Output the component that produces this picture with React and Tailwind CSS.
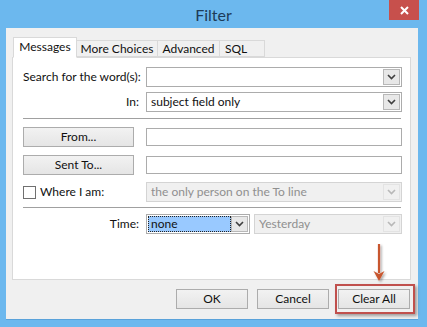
import React from 'react'

const font = { fontFamily: 'Lato, "Noto Sans", sans-serif' }

function Chevron({ disabled }) {
  return (
    <svg width="9" height="6" viewBox="0 0 9 6">
      <path d="M1 1 L4.5 4.5 L8 1" fill="none" stroke={disabled ? '#b8b8b8' : '#404040'} strokeWidth="1.6" />
    </svg>
  )
}

function Combo({ value, disabled, selected, className = '' }) {
  return (
    <div
      className={`flex items-stretch h-[20px] border p-[1px] ${
        disabled ? 'bg-[#f0f0f0] border-[#d4d4d4]' : 'bg-white border-[#acacac]'
      } ${className}`}
    >
      <div className="flex-1 flex items-center min-w-0">
        {selected ? (
          <span className="flex-1 h-full flex items-center bg-[#99c9ff] border border-dotted border-[#222] pl-[2px] text-[#111]">
            {value}
          </span>
        ) : (
          <span className={`pl-[3px] whitespace-nowrap ${disabled ? 'text-[#8f8f8f]' : 'text-[#111]'}`}>{value}</span>
        )}
      </div>
      <div
        className={`w-[17px] flex items-center justify-center border ${
          disabled ? 'border-[#e3e3e3] bg-[#f0f0f0]' : 'border-[#b8b8b8] bg-[#e8e8e8]'
        }`}
      >
        <Chevron disabled={disabled} />
      </div>
    </div>
  )
}

function Field() {
  return <div className="h-[18px] bg-white border border-[#acacac]" />
}

function Btn({ children, className = '' }) {
  return (
    <div
      className={`h-[20px] flex items-center justify-center border border-[#acacac] bg-gradient-to-b from-[#f2f2f2] to-[#e5e5e5] text-[#111] ${className}`}
    >
      {children}
    </div>
  )
}

export default function App() {
  return (
    <div
      className="w-[427px] h-[327px] bg-[#6cb8ee] relative flex flex-col text-[12px] leading-[16px] whitespace-nowrap"
      style={font}
    >
      {/* Title bar */}
      <div className="h-[28px] flex items-center justify-center text-[16px] text-[#1d3b58] pt-[1px]">Filter</div>
      <div className="absolute right-[8px] top-0 w-[30px] h-[20px] bg-[#c7504c] flex items-center justify-center">
        <svg width="9" height="9" viewBox="0 0 9 9">
          <path d="M1 1 L8 8 M8 1 L1 8" stroke="#fff" strokeWidth="2" />
        </svg>
      </div>

      {/* Body */}
      <div className="ml-[6px] mr-[9px] h-[292px] bg-[#f0f0f0] border-b border-[#5aa2da] pt-[9px] pl-[6px] pr-[7px] flex flex-col">
        {/* Tabs */}
        <div className="flex items-end h-[20px] pl-[1px] relative z-10">
          <div className="h-[21px] -mb-[1px] w-[64px] bg-white border border-[#d9d9d9] border-b-white flex items-center justify-center pb-[1px] text-[#111]">
            Messages
          </div>
          <div className="h-[17px] w-[81px] bg-[#f0f0f0] border border-[#d9d9d9] border-l-0 flex items-center justify-center text-[#111]">
            More Choices
          </div>
          <div className="h-[17px] w-[62px] bg-[#f0f0f0] border border-[#d9d9d9] border-l-0 flex items-center justify-center text-[#111]">
            Advanced
          </div>
          <div className="h-[17px] w-[45px] bg-[#f0f0f0] border border-[#d9d9d9] border-l-0 flex items-center pl-[5px] text-[#111]">
            SQL
          </div>
        </div>

        {/* Panel */}
        <div className="h-[223px] bg-white border border-[#d9d9d9] pl-[10px] pr-[8px] pt-[9px] text-[#111]">
          <div className="grid grid-cols-[116px_1fr] gap-x-[7px] items-center">
            <div className="text-right">Search for the word(s):</div>
            <Combo value="" />
            <div className="text-right mt-[5px]">In:</div>
            <Combo value="subject field only" className="mt-[5px]" />
          </div>

          <div className="h-px bg-[#a0a0a0] mt-[6px] mr-[1px]" />

          <div className="grid grid-cols-[111px_1fr] gap-x-[12px] items-center mt-[8px]">
            <Btn className="h-[18px]">From...</Btn>
            <Field />
            <Btn className="h-[18px] mt-[8px]">Sent To...</Btn>
            <div className="mt-[8px]">
              <Field />
            </div>
          </div>

          <div className="grid grid-cols-[116px_1fr] gap-x-[7px] items-center mt-[7px]">
            <div className="flex items-center gap-[4px]">
              <div className="w-[13px] h-[13px] border border-[#707070] bg-white" />
              <span>Where I am:</span>
            </div>
            <Combo value="the only person on the To line" disabled />
          </div>

          <div className="h-px bg-[#a0a0a0] mt-[5px] mr-[1px]" />

          <div className="grid grid-cols-[116px_1fr] gap-x-[7px] items-center mt-[6px]">
            <div className="text-right">Time:</div>
            <div className="flex gap-[4px]">
              <Combo value="none" selected className="w-[104px]" />
              <Combo value="Yesterday" disabled className="flex-1" />
            </div>
          </div>
        </div>

        {/* Buttons */}
        <div className="flex justify-end gap-[9px] mt-[9px] pr-[1px]">
          <Btn className="w-[72px] border-[#3c7fb1]">OK</Btn>
          <Btn className="w-[72px]">Cancel</Btn>
          <Btn className="w-[72px]">Clear All</Btn>
        </div>
      </div>

      {/* Annotation overlay */}
      <div className="absolute left-[335px] top-[284px] w-[80px] h-[30px] border-2 border-[#c0504d] shadow-[2px_2px_3px_rgba(0,0,0,0.35)]" />
      <svg className="absolute left-[370px] top-[243px]" width="20" height="42" viewBox="0 0 20 42">
        <defs>
          <filter id="sh" x="-50%" y="-50%" width="200%" height="200%">
            <feDropShadow dx="1.5" dy="1.5" stdDeviation="1" floodColor="#000" floodOpacity="0.35" />
          </filter>
        </defs>
        <g filter="url(#sh)">
          <path d="M9 1 L9 30" stroke="#c8572f" strokeWidth="2.2" />
          <path d="M3.5 28 L9 38 L14.5 28 L9 31 Z" fill="#c8572f" />
        </g>
      </svg>
    </div>
  )
}
